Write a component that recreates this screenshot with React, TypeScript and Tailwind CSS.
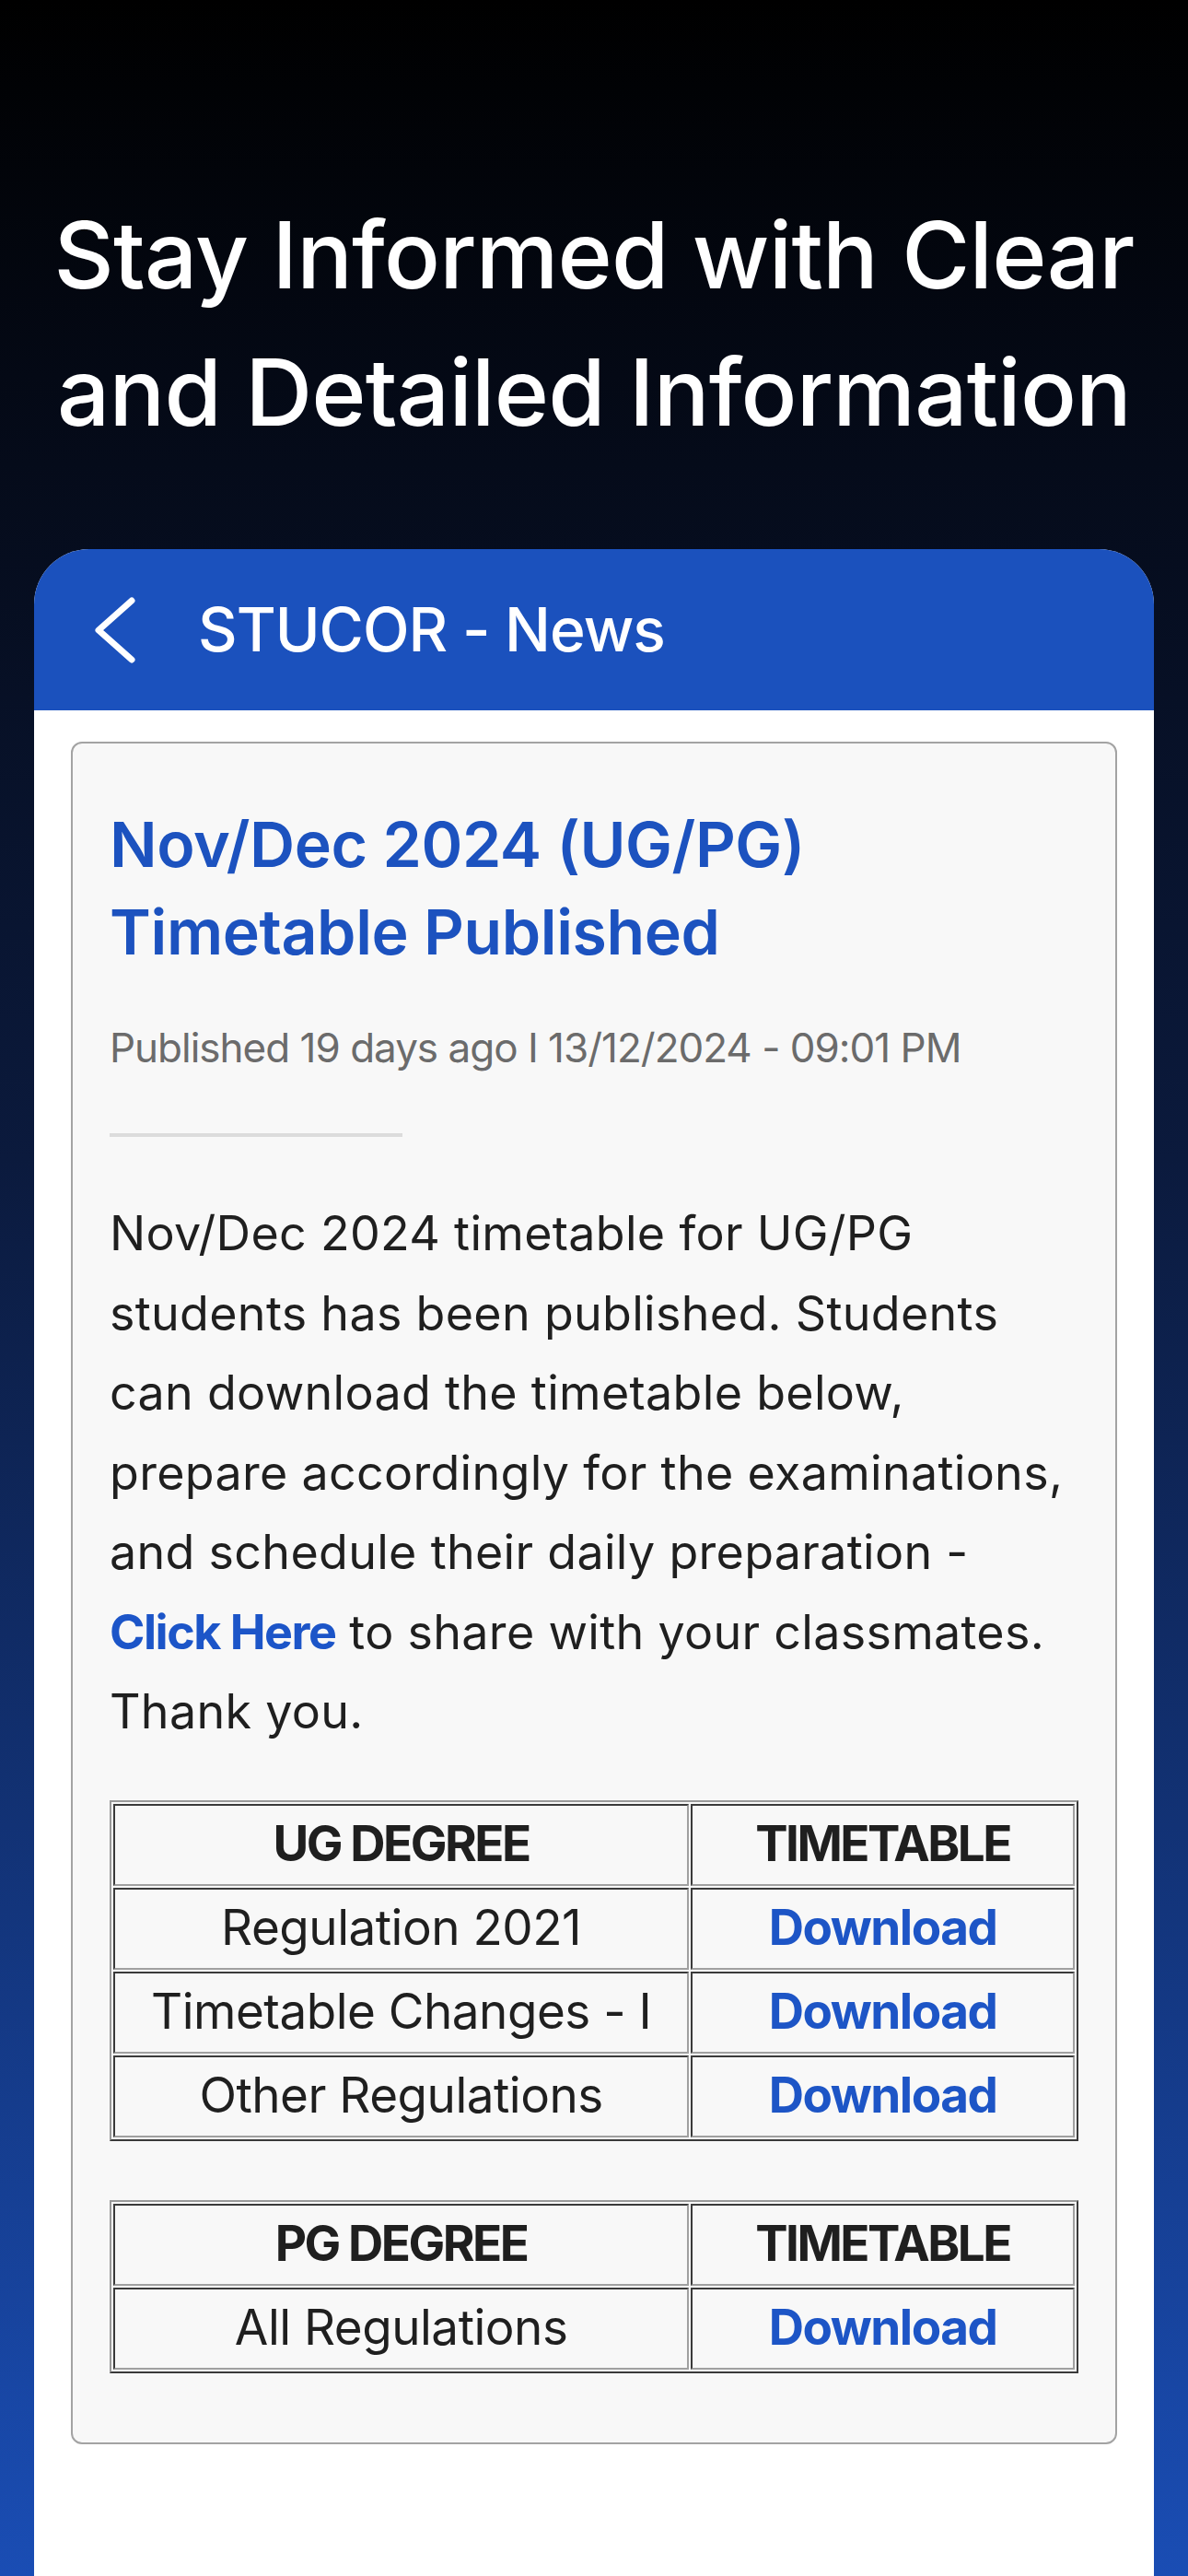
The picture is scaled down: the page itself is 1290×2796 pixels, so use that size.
const font = { fontFamily: "Inter, 'Noto Sans', sans-serif" };

const ugRows = ["Regulation 2021", "Timetable Changes - I", "Other Regulations"];
const pgRows = ["All Regulations"];

// inset cell edges like an old-style html table
const cell =
  "h-[89px] border-2 border-t-[#3a3a3a] border-l-[#3a3a3a] border-b-[#a0a0a0] border-r-[#a0a0a0] text-[53px]";

function TimetableTable({ title, rows }: { title: string; rows: string[] }) {
  return (
    <table className="w-full border-separate border-spacing-[2px] border-2 border-t-[#9a9a9a] border-l-[#9a9a9a] border-b-[#3a3a3a] border-r-[#3a3a3a] text-center text-[#1f1f1f]">
      <colgroup>
        <col className="w-[60%]" />
        <col className="w-[40%]" />
      </colgroup>
      <thead>
        <tr>
          <th className={`${cell} font-bold tracking-[-2.5px]`}>{title}</th>
          <th className={`${cell} font-bold tracking-[-2.5px]`}>TIMETABLE</th>
        </tr>
      </thead>
      <tbody>
        {rows.map((row) => (
          <tr key={row}>
            <td className={`${cell} tracking-[-0.5px]`}>{row}</td>
            <td className={`${cell} font-bold tracking-[-1.5px] text-[#1d55c6]`}>Download</td>
          </tr>
        ))}
      </tbody>
    </table>
  );
}

export default function App() {
  return (
    <div
      style={font}
      className="h-[2796px] w-[1290px] overflow-hidden bg-[linear-gradient(to_bottom,#000000_0%,#050b1a_18%,#0b1a3d_45%,#1a4db4_100%)]"
    >
      {/* Headline */}
      <h1 className="pt-[202px] text-center text-[101px] font-medium leading-[149px] tracking-[-0.8px] text-white">
        Stay Informed with Clear
        <br />
        and Detailed Information
      </h1>

      {/* Phone card */}
      <div className="mx-[37px] mt-[96px] h-[2300px] overflow-hidden rounded-t-[60px] bg-white">
        <div className="flex h-[175px] items-center bg-[#1b51bd] pl-[66px] text-white">
          <svg width="44" height="72" viewBox="0 0 44 72" fill="none">
            <polyline
              points="40,4 4,36 40,68"
              stroke="white"
              strokeWidth="7"
              strokeLinecap="round"
              strokeLinejoin="round"
            />
          </svg>
          <span className="ml-[68px] text-[66px] font-medium tracking-[-1px]">
            STUCOR - News
          </span>
        </div>

        <div className="mx-[40px] mt-[34px] rounded-[12px] border-2 border-[#a3a3a3] bg-[#f8f8f8] px-[40px] pt-[62px] pb-[75px]">
          <h2 className="text-[68px] font-semibold leading-[95px] tracking-[-0.4px] text-[#1c52bf]">
            Nov/Dec 2024 (UG/PG)
            <br />
            Timetable Published
          </h2>

          <p className="mt-[48px] text-[44px] leading-[60px] tracking-[-1px] text-[#6b6b6b]">
            Published 19 days ago I 13/12/2024 - 09:01 PM
          </p>

          <div className="mt-[63px] h-[4px] w-[318px] bg-[#dcdcdc]" />

          <p className="mt-[62px] text-[52px] leading-[86.5px] tracking-[0.3px] text-[#1f1f1f]">
            Nov/Dec 2024 timetable for UG/PG
            <br />
            students has been published. Students
            <br />
            can download the timetable below,
            <br />
            prepare accordingly for the examinations,
            <br />
            and schedule their daily preparation -
            <br />
            <span className="font-bold tracking-[-1.5px] text-[#1c55c8]">Click Here</span> to share
            with your classmates.
            <br />
            Thank you.
          </p>

          <div className="mt-[52px]">
            <TimetableTable title="UG DEGREE" rows={ugRows} />
          </div>
          <div className="mt-[64px]">
            <TimetableTable title="PG DEGREE" rows={pgRows} />
          </div>
        </div>
      </div>
    </div>
  );
}
